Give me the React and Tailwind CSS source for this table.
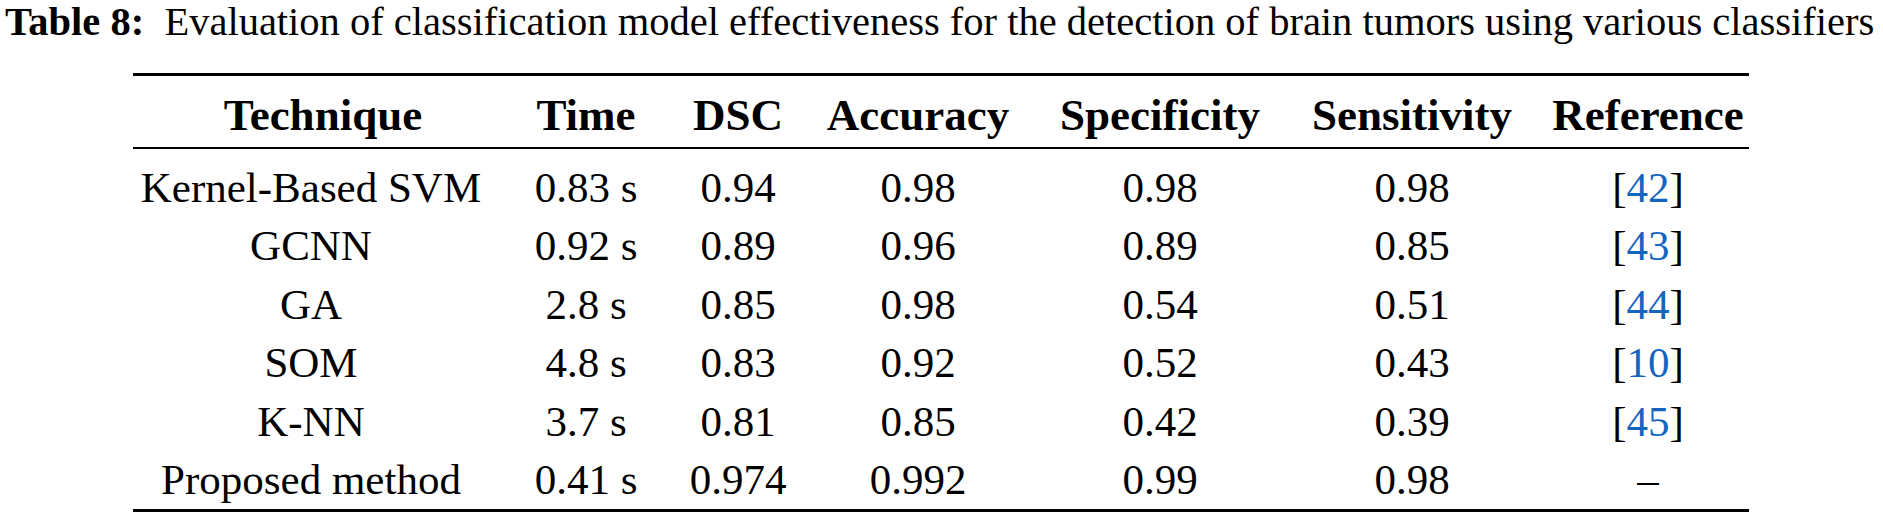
import React from "react";

const cols = [
  { key: "technique", label: "Technique", w: "w-[356px]" },
  { key: "time", label: "Time", w: "w-[194px]" },
  { key: "dsc", label: "DSC", w: "w-[110px]" },
  { key: "accuracy", label: "Accuracy", w: "w-[250px]" },
  { key: "specificity", label: "Specificity", w: "w-[234px]" },
  { key: "sensitivity", label: "Sensitivity", w: "w-[270px]" },
  { key: "reference", label: "Reference", w: "w-[202px]" },
];

const rows = [
  ["Kernel-Based SVM", "0.83 s", "0.94", "0.98", "0.98", "0.98", "42"],
  ["GCNN", "0.92 s", "0.89", "0.96", "0.89", "0.85", "43"],
  ["GA", "2.8 s", "0.85", "0.98", "0.54", "0.51", "44"],
  ["SOM", "4.8 s", "0.83", "0.92", "0.52", "0.43", "10"],
  ["K-NN", "3.7 s", "0.81", "0.85", "0.42", "0.39", "45"],
  ["Proposed method", "0.41 s", "0.974", "0.992", "0.99", "0.98", null],
];

export default function App() {
  return (
    <div className="w-[1883px] h-[515px] bg-white text-black font-['Liberation_Serif',serif] overflow-hidden">
      <p className="pl-[5px] text-[40.5px] leading-[44px] whitespace-nowrap">
        <span className="font-bold">Table 8:</span>&nbsp; Evaluation of classification model effectiveness for the detection of brain tumors using various classifiers
      </p>

      <div className="ml-[133px] w-[1616px] mt-[29px]">
        <div className="h-[3px] bg-black" />
        <div className="flex pt-[19px] pb-[12px] text-[45px] leading-[40px] font-bold">
          {cols.map((c) => (
            <div key={c.key} className={`${c.w} text-center ${c.key === "technique" ? "pl-[24px]" : ""}`}>
              {c.label}
            </div>
          ))}
        </div>
        <div className="h-[2px] bg-black" />
        <div className="pt-[10px]">
          {rows.map((r, i) => (
            <div key={i} className="flex text-[43px] leading-[58.4px]">
              {r.map((v, j) => (
                <div key={j} className={`${cols[j].w} text-center`}>
                  {j === 6 ? (
                    v ? (
                      <span>
                        [<span className="text-[#1565c0]">{v}</span>]
                      </span>
                    ) : (
                      <span>–</span>
                    )
                  ) : (
                    v
                  )}
                </div>
              ))}
            </div>
          ))}
        </div>
        <div className="h-[3px] bg-black" />
      </div>
    </div>
  );
}
